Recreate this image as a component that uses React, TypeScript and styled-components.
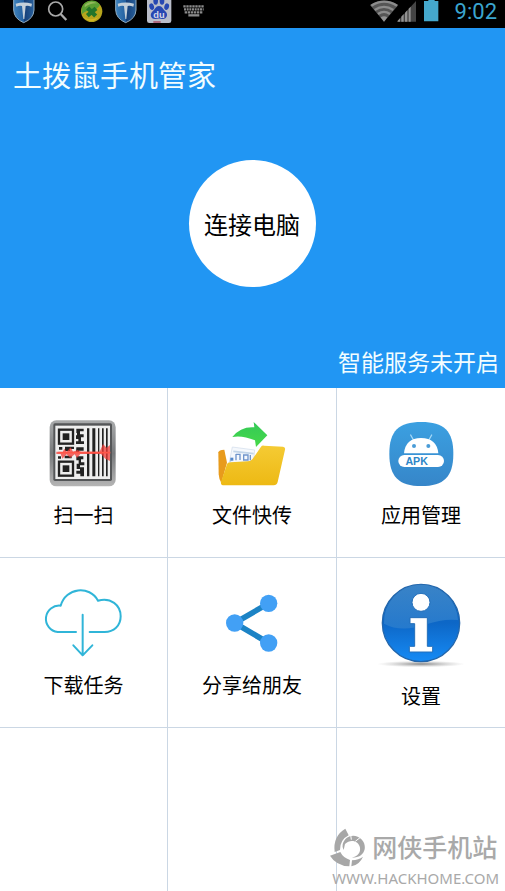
import React from "react";
import styled, { createGlobalStyle } from "styled-components";

const GlobalStyle = createGlobalStyle`
  *, *::before, *::after { box-sizing: border-box; }
  body {
    margin: 0;
    background: #fff;
    font-family: "Noto Sans", "Noto Sans CJK SC", sans-serif;
  }
`;

const Page = styled.div`
  position: relative;
  display: flex;
  flex-direction: column;
  min-height: 100vh;
`;

const StatusBar = styled.div`
  display: flex;
  justify-content: space-between;
  height: 28px;
  padding: 0 8px 0 13px;
  background: #000;
  overflow: hidden;
`;

const StatusGroup = styled.div<{ $gap: number }>`
  display: flex;
  gap: ${(p) => p.$gap}px;
`;

const Icon = styled.svg<{ $w: number; $h: number }>`
  display: block;
  flex: none;
  width: ${(p) => p.$w}px;
  height: ${(p) => p.$h}px;
  overflow: visible;
`;

const Clock = styled.time`
  margin-left: 8px;
  color: #3ba5cf;
  font: 22px/24px Roboto, sans-serif;
`;

const Hero = styled.header`
  display: flex;
  flex-direction: column;
  height: 360px;
  padding: 28px 6px 10px 13px;
  background: #2196f3;
  color: #f2fdff;
`;

const Title = styled.h1`
  margin: 0;
  font-size: 29px;
  line-height: 40px;
  font-weight: 400;
`;

const ConnectButton = styled.button`
  align-self: center;
  width: 127px;
  height: 127px;
  margin: 64px 8px auto 0;
  padding: 0;
  border: 0;
  border-radius: 50%;
  background: #fff;
  color: #000;
  font: inherit;
  font-size: 24px;
`;

const ServiceState = styled.p`
  align-self: flex-end;
  margin: 0;
  font-size: 23px;
  line-height: 32px;
`;

const Grid = styled.main`
  flex: 1;
  display: grid;
  grid-template-columns: 167fr 168fr 168fr;
  grid-template-rows: 169px 169px 1fr;
  gap: 1px;
  background: #cbd7e4;
`;

const Tile = styled.button`
  display: flex;
  flex-direction: column;
  align-items: center;
  justify-content: center;
  gap: 16px;
  padding: 2px 0 0;
  border: 0;
  background: #fff;
  color: #000;
  font: inherit;
  font-size: 20px;
  line-height: 24px;
`;

const EmptyTile = styled.div`
  background: #fff;
`;

const Watermark = styled.footer`
  position: absolute;
  right: 6px;
  bottom: 2px;
  display: flex;
  flex-direction: column;
  align-items: flex-start;
  color: #a9a9a9;
`;

const Brand = styled.div`
  display: flex;
  align-items: center;
  gap: 6px;
  font-size: 25px;
  line-height: 40px;
  font-weight: 500;
`;

const Site = styled.span`
  padding-left: 2px;
  font: 15px/22px "Noto Sans", sans-serif;
`;

const Shield = ({ id }: { id: string }) => (
  <Icon $w={22} $h={28} viewBox="38 0 66 84" aria-hidden="true">
    <defs>
      <linearGradient id={id} x1="0" x2="1">
        <stop offset="0" stopColor="#3e82bd" />
        <stop offset=".5" stopColor="#235f9f" />
        <stop offset=".52" stopColor="#153f78" />
        <stop offset="1" stopColor="#29609b" />
      </linearGradient>
    </defs>
    <path d="M40-4H101V30Q100 56 70 68Q41 56 40 30Z" fill={`url(#${id})`} stroke="#91adc2" strokeWidth="3" />
    <path d="M46 11Q70 4 95 11L93 20Q83 16 76 18L72 57H69L65 18Q57 16 48 20Z" fill="#c4d0da" />
  </Icon>
);

const SearchIcon = () => (
  <Icon $w={22} $h={28} viewBox="141 0 66 84" aria-hidden="true">
    <g fill="none" stroke="#aaa" strokeWidth="5">
      <circle cx="167" cy="27" r="21" />
      <path d="M182 42L199 60" strokeWidth="7" />
    </g>
  </Icon>
);

const BallIcon = () => (
  <Icon $w={22} $h={28} viewBox="242 0 66 84" aria-hidden="true">
    <circle cx="274" cy="34" r="32" fill="#b6a51d" />
    <path d="M244 25A31 31 0 0 1 299 14Q290 30 275 31Q257 31 244 43Z" fill="#5b9f33" />
    <path d="M253 14Q270-1 291 10Q272 8 253 22Z" fill="#93b95c" />
    <path d="M249 50Q269 65 294 52Q275 75 249 50Z" fill="#d3b526" />
    <path d="M262 24L286 48M287 25L261 47" stroke="#22752a" strokeWidth="13" />
  </Icon>
);

const PawIcon = () => (
  <Icon $w={22} $h={28} viewBox="447 0 66 84" aria-hidden="true">
    <rect x="441" y="-6" width="73" height="75" rx="7" fill="#b9bdc9" />
    <g fill="#2748b2">
      <ellipse cx="455" cy="20" rx="7" ry="10" transform="rotate(-15 455 20)" />
      <ellipse cx="467" cy="3" rx="7" ry="11" />
      <ellipse cx="486" cy="3" rx="7" ry="11" />
      <ellipse cx="500" cy="20" rx="7" ry="10" transform="rotate(15 500 20)" />
      <path d="M477 18C487 18 489 28 496 34C507 44 499 59 487 57Q477 54 467 57C453 59 447 44 458 34C465 28 467 18 477 18Z" />
    </g>
    <text x="477" y="53" textAnchor="middle" fill="#d5d9e8" fontFamily="Liberation Sans, sans-serif" fontWeight="700" fontSize="28">du</text>
    <path d="M460 66H482" stroke="#a53b55" strokeWidth="4" />
  </Icon>
);

const KeyboardIcon = () => (
  <Icon $w={22} $h={28} viewBox="546 0 66 84" aria-hidden="true">
    <g fill="none" stroke="#8b8b8b" strokeWidth="7">
      <path d="M547 19H610" strokeDasharray="7 2" />
      <path d="M549 28H608" strokeDasharray="6 2" />
      <path d="M551 37H606" strokeDasharray="7 2" />
      <path d="M562 46H595" />
    </g>
  </Icon>
);

const WifiIcon = () => (
  <Icon $w={27} $h={28} viewBox="45 0 81 84" aria-hidden="true">
    <path d="M45 15Q87-11 130 15L87 65Z" fill="#555" />
    <g fill="none" stroke="#8c8c8c" strokeWidth="7">
      <path d="M49 17Q87-7 126 17" />
      <path d="M59 30Q87 11 115 30" />
      <path d="M69 42Q87 29 105 42" />
    </g>
    <path d="M77 52Q87 45 97 52L87 65Z" fill="#929292" />
  </Icon>
);

const SignalIcon = () => (
  <Icon $w={19} $h={28} viewBox="125 0 57 84" aria-hidden="true">
    <path d="M125 65L182 3V65Z" fill="#444" />
    <g fill="#929292">
      <path d="M127 65V62L134 55V65Z" />
      <path d="M138 65V50L145 42V65Z" />
      <path d="M149 65V38L156 31V65Z" />
      <path d="M160 65V26L166 20V65Z" />
    </g>
  </Icon>
);

const BatteryIcon = () => (
  <Icon $w={15} $h={28} viewBox="207 0 45 84" aria-hidden="true">
    <path d="M220-3H239V3H250V64H207V3H220Z" fill="#45a8cc" />
  </Icon>
);

const ScanIcon = () => (
  <Icon $w={68} $h={68} viewBox="29 27 204 204" aria-hidden="true">
    <defs>
      <linearGradient id="scanFrame" x1="0" y1="0" x2="0" y2="1">
        <stop offset="0" stopColor="#a9abac" />
        <stop offset=".5" stopColor="#77797b" />
        <stop offset="1" stopColor="#b5b5b5" />
      </linearGradient>
    </defs>
    <rect x="28" y="28" width="198" height="198" rx="20" fill="url(#scanFrame)" />
    <rect x="39" y="37" width="176" height="173" rx="5" fill="#545658" />
    <rect x="45" y="44" width="164" height="160" fill="#eee" />
    <g fill="none" stroke="#222" strokeWidth="7">
      <rect x="56" y="56" width="42" height="42" />
      <rect x="56" y="152" width="42" height="42" />
    </g>
    <g fill="#222">
      <rect x="67" y="67" width="20" height="20" />
      <rect x="67" y="163" width="20" height="20" />
      <path d="M108 53H130V61H119V70H130V79H122V91H131V99H107V91H114V84H107V73H110V66H108Z" />
      <path d="M56 108H66V116H56ZM74 107H101V114H89V120H74ZM108 109H130V119H116V125H107Z" />
      <path d="M53 136H62V143H53ZM73 134H94V142H73ZM108 136H129V145H122V154H132V163H119V169H131V196H120V188H108V179H119V174H109V158H115V148H108Z" />
      <path d="M140 52H147V196H140ZM156 52H165V196H156ZM173 52H177V196H173ZM185 52H190V196H185ZM197 52H202V196H197Z" />
    </g>
    <path d="M48 122L67 123L72 113L79 122L91 109L98 122L112 117L122 122H178L188 99L199 110L209 102V150L195 143L182 129H120L110 141L103 130L90 141L79 130L66 143L61 129H48Z" fill="#f23b36" opacity=".75" />
    <path d="M54 125H210" stroke="#ff5548" strokeWidth="5" />
  </Icon>
);

const FolderIcon = () => (
  <Icon $w={68} $h={68} viewBox="40 27 204 204" aria-hidden="true">
    <defs>
      <linearGradient id="folderFace" x1="0" y1="0" x2="0" y2="1">
        <stop offset="0" stopColor="#f5cb34" />
        <stop offset="1" stopColor="#edb914" />
      </linearGradient>
      <linearGradient id="arrowFace" x1="0" y1="0" x2="0" y2="1">
        <stop offset="0" stopColor="#34c958" />
        <stop offset="1" stopColor="#46d948" />
      </linearGradient>
    </defs>
    <path d="M41 124Q42 117 59 116L67 155L50 216Q43 205 42 190Z" fill="#e89b1c" />
    <path d="M83 108L150 117L147 150L73 158Z" fill="#f5f8fc" stroke="#cedbea" strokeWidth="2" />
    <path d="M86 121L147 128M81 143L76 153" stroke="#c1d4e8" strokeWidth="5" />
    <path d="M94 129V148M94 130H106V147M117 132H130V147H117ZM137 132V148" fill="none" stroke="#6f94cb" strokeWidth="4" />
    <path d="M77 140H86V149H77Z" fill="#5487ca" />
    <path d="M143 145L169 107Q172 103 178 104L235 107Q243 108 241 116L219 213Q216 223 207 223H54Q47 221 49 213L67 159Q69 154 77 154L130 151Q138 151 143 145Z" fill="url(#folderFace)" />
    <path d="M83 78Q108 46 149 49L147 33L188 73L154 108L151 88Q112 72 83 78Z" fill="url(#arrowFace)" />
  </Icon>
);

const ApkIcon = () => (
  <Icon $w={68} $h={68} viewBox="37 27 204 204" aria-hidden="true">
    <defs>
      <linearGradient id="apkFace" x1="0" y1="0" x2="0" y2="1">
        <stop offset="0" stopColor="#3ba0e1" />
        <stop offset="1" stopColor="#3686c9" />
      </linearGradient>
    </defs>
    <path d="M140 33C208 33 236 60 236 128C236 197 208 225 140 225C72 225 44 197 44 128C44 60 72 33 140 33Z" fill="url(#apkFace)" />
    <path d="M108 72L118 90M171 72L161 90" stroke="#a4d8f7" strokeWidth="4" strokeLinecap="round" />
    <path d="M88 127Q92 82 139 81Q187 82 191 127Z" fill="#fff" />
    <rect x="71" y="132" width="137" height="36" rx="18" fill="#fff" />
    <circle cx="118" cy="105" r="6" fill="#4a9cd7" />
    <circle cx="161" cy="105" r="6" fill="#4a9cd7" />
    <text x="126" y="161" textAnchor="middle" fill="#2d86c7" fontFamily="Liberation Sans, sans-serif" fontWeight="700" fontSize="32">APK</text>
  </Icon>
);

const CloudIcon = () => (
  <Icon $w={80} $h={68} viewBox="26 27 240 204" aria-hidden="true">
    <g fill="none" stroke="#30b5d8" strokeWidth="6" strokeLinecap="round" strokeLinejoin="round">
      <path d="M122 153H67A39 39 0 1 1 76 74C91 19 163 12 188 59C226 48 256 72 256 106C256 135 235 153 208 153H163" />
      <path d="M142 101V223M114 193L142 223L171 193" />
    </g>
  </Icon>
);

const ShareIcon = () => (
  <Icon $w={68} $h={68} viewBox="70 27 204 204" aria-hidden="true">
    <path d="M222 67L120 126L222 186" fill="none" stroke="#1c83c5" strokeWidth="17" />
    <g fill="#42a0f5">
      <circle cx="222" cy="67" r="26" />
      <circle cx="120" cy="126" r="26" />
      <circle cx="222" cy="186" r="26" />
    </g>
  </Icon>
);

const InfoIcon = () => (
  <Icon $w={90} $h={90} viewBox="19 9 270 270" aria-hidden="true">
    <defs>
      <linearGradient id="infoFace" x1="0" y1="0" x2="0" y2="1">
        <stop offset="0" stopColor="#1669bb" />
        <stop offset=".5" stopColor="#0d67c7" />
        <stop offset="1" stopColor="#168bf5" />
      </linearGradient>
      <linearGradient id="infoGloss" x1="0" y1="0" x2="0" y2="1">
        <stop offset="0" stopColor="#458ccb" />
        <stop offset="1" stopColor="#2d7fce" />
      </linearGradient>
      <radialGradient id="infoShadow">
        <stop offset="0" stopColor="#888" />
        <stop offset="1" stopColor="#bbb" stopOpacity="0" />
      </radialGradient>
    </defs>
    <ellipse cx="154" cy="264" rx="132" ry="10" fill="url(#infoShadow)" />
    <circle cx="154" cy="141" r="116" fill="url(#infoFace)" stroke="#2366ab" strokeWidth="4" />
    <path d="M43 143A111 111 0 0 1 265 132Q220 127 170 145Q95 171 43 143Z" fill="url(#infoGloss)" opacity=".75" />
    <g fill="#fff" stroke="#236fba" strokeWidth="3">
      <circle cx="154" cy="79" r="27" />
      <path d="M121 125H173V211H189V228H119V211H135V143H121Z" />
    </g>
  </Icon>
);

const BrandMark = () => (
  <Icon $w={36} $h={39} viewBox="35 33 108 117" aria-hidden="true">
    <g fill="#a7a7a7">
      <path d="M81 35L91 55Q65 68 65 99L49 105Q43 57 81 35Z" />
      <path d="M35 116L66 105Q74 122 95 129L93 148Q53 146 35 116Z" />
      <path d="M101 130Q121 129 134 119Q124 143 99 148Z" />
      <path d="M73 82C80 59 100 52 118 59C134 66 142 82 139 97C135 114 119 124 101 121C118 118 127 107 125 92C122 73 97 64 80 81L76 99Q71 91 73 82Z" />
    </g>
    <path d="M97 53L99 68M111 73L125 62" stroke="#fff" strokeWidth="3" />
  </Icon>
);

const tiles = [
  { label: "扫一扫", Glyph: ScanIcon },
  { label: "文件快传", Glyph: FolderIcon },
  { label: "应用管理", Glyph: ApkIcon },
  { label: "下载任务", Glyph: CloudIcon },
  { label: "分享给朋友", Glyph: ShareIcon },
  { label: "设置", Glyph: InfoIcon },
];

export default function App() {
  return (
    <>
      <GlobalStyle />
      <Page>
        <StatusBar>
          <StatusGroup $gap={12}>
            <Shield id="shieldLeft" />
            <SearchIcon />
            <BallIcon />
            <Shield id="shieldRight" />
            <PawIcon />
            <KeyboardIcon />
          </StatusGroup>
          <StatusGroup $gap={0}>
            <WifiIcon />
            <StatusGroup $gap={8}>
              <SignalIcon />
              <BatteryIcon />
              <Clock>9:02</Clock>
            </StatusGroup>
          </StatusGroup>
        </StatusBar>
        <Hero>
          <Title>土拨鼠手机管家</Title>
          <ConnectButton type="button">连接电脑</ConnectButton>
          <ServiceState>智能服务未开启</ServiceState>
        </Hero>
        <Grid>
          {tiles.map(({ label, Glyph }) => (
            <Tile key={label} type="button">
              <Glyph />
              <span>{label}</span>
            </Tile>
          ))}
          <EmptyTile />
          <EmptyTile />
          <EmptyTile />
        </Grid>
        <Watermark>
          <Brand>
            <BrandMark />
            <span>网侠手机站</span>
          </Brand>
          <Site>WWW.HACKHOME.COM</Site>
        </Watermark>
      </Page>
    </>
  );
}
